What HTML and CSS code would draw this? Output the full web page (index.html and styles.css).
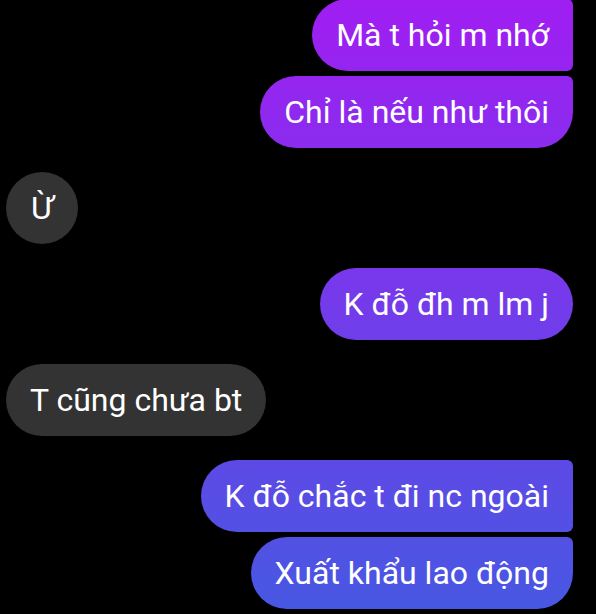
FILE: index.html
```html
<!DOCTYPE html>
<html lang="vi">
<head>
  <meta charset="UTF-8" />
  <meta name="viewport" content="width=device-width, initial-scale=1.0" />
  <title>Chat</title>
  <link rel="stylesheet" href="styles.css">
</head>
<body>
  <div class="chat">
    <div class="group mine">
      <div class="bubble first">Mà t hỏi m nhớ</div>
      <div class="bubble last">Chỉ là nếu như thôi</div>
    </div>
    <div class="group theirs">
      <div class="bubble single">Ừ</div>
    </div>
    <div class="group mine">
      <div class="bubble single">K đỗ đh m lm j</div>
    </div>
    <div class="group theirs">
      <div class="bubble single">T cũng chưa bt</div>
    </div>
    <div class="group mine">
      <div class="bubble first">K đỗ chắc t đi nc ngoài</div>
      <div class="bubble last">Xuất khẩu lao động</div>
    </div>
  </div>
</body>
</html>
```

FILE: styles.css
```css
:root {
  --grad-top: #a01ef2;
  --grad-bottom: #4758e2;
  --gray: #333333;
}
* { box-sizing: border-box; }
html, body { height: 100%; }
body {
  margin: 0;
  background: #000;
  color: #fff;
  font-family: Roboto, 'Noto Sans', sans-serif;
  overflow: hidden;
}
.chat {
  display: flex;
  flex-direction: column;
  gap: 24px;
  margin-top: -1px;
  padding: 0 23px 0 6px;
}
.group { display: flex; flex-direction: column; gap: 5px; }
.group.mine { align-items: flex-end; }
.group.theirs { align-items: flex-start; }
.bubble {
  height: 72px;
  min-width: 72px;
  padding: 0 24px;
  display: flex;
  align-items: center;
  justify-content: center;
  font-size: 32px;
  border-radius: 36px;
  white-space: nowrap;
}
.theirs .bubble { background: var(--gray); }
.mine .bubble {
  background: linear-gradient(to bottom, var(--grad-top), var(--grad-bottom)) fixed;
}
.mine .bubble.first { border-radius: 36px 6px 6px 36px; }
.mine .bubble.last { border-radius: 36px 6px 36px 36px; }
```
